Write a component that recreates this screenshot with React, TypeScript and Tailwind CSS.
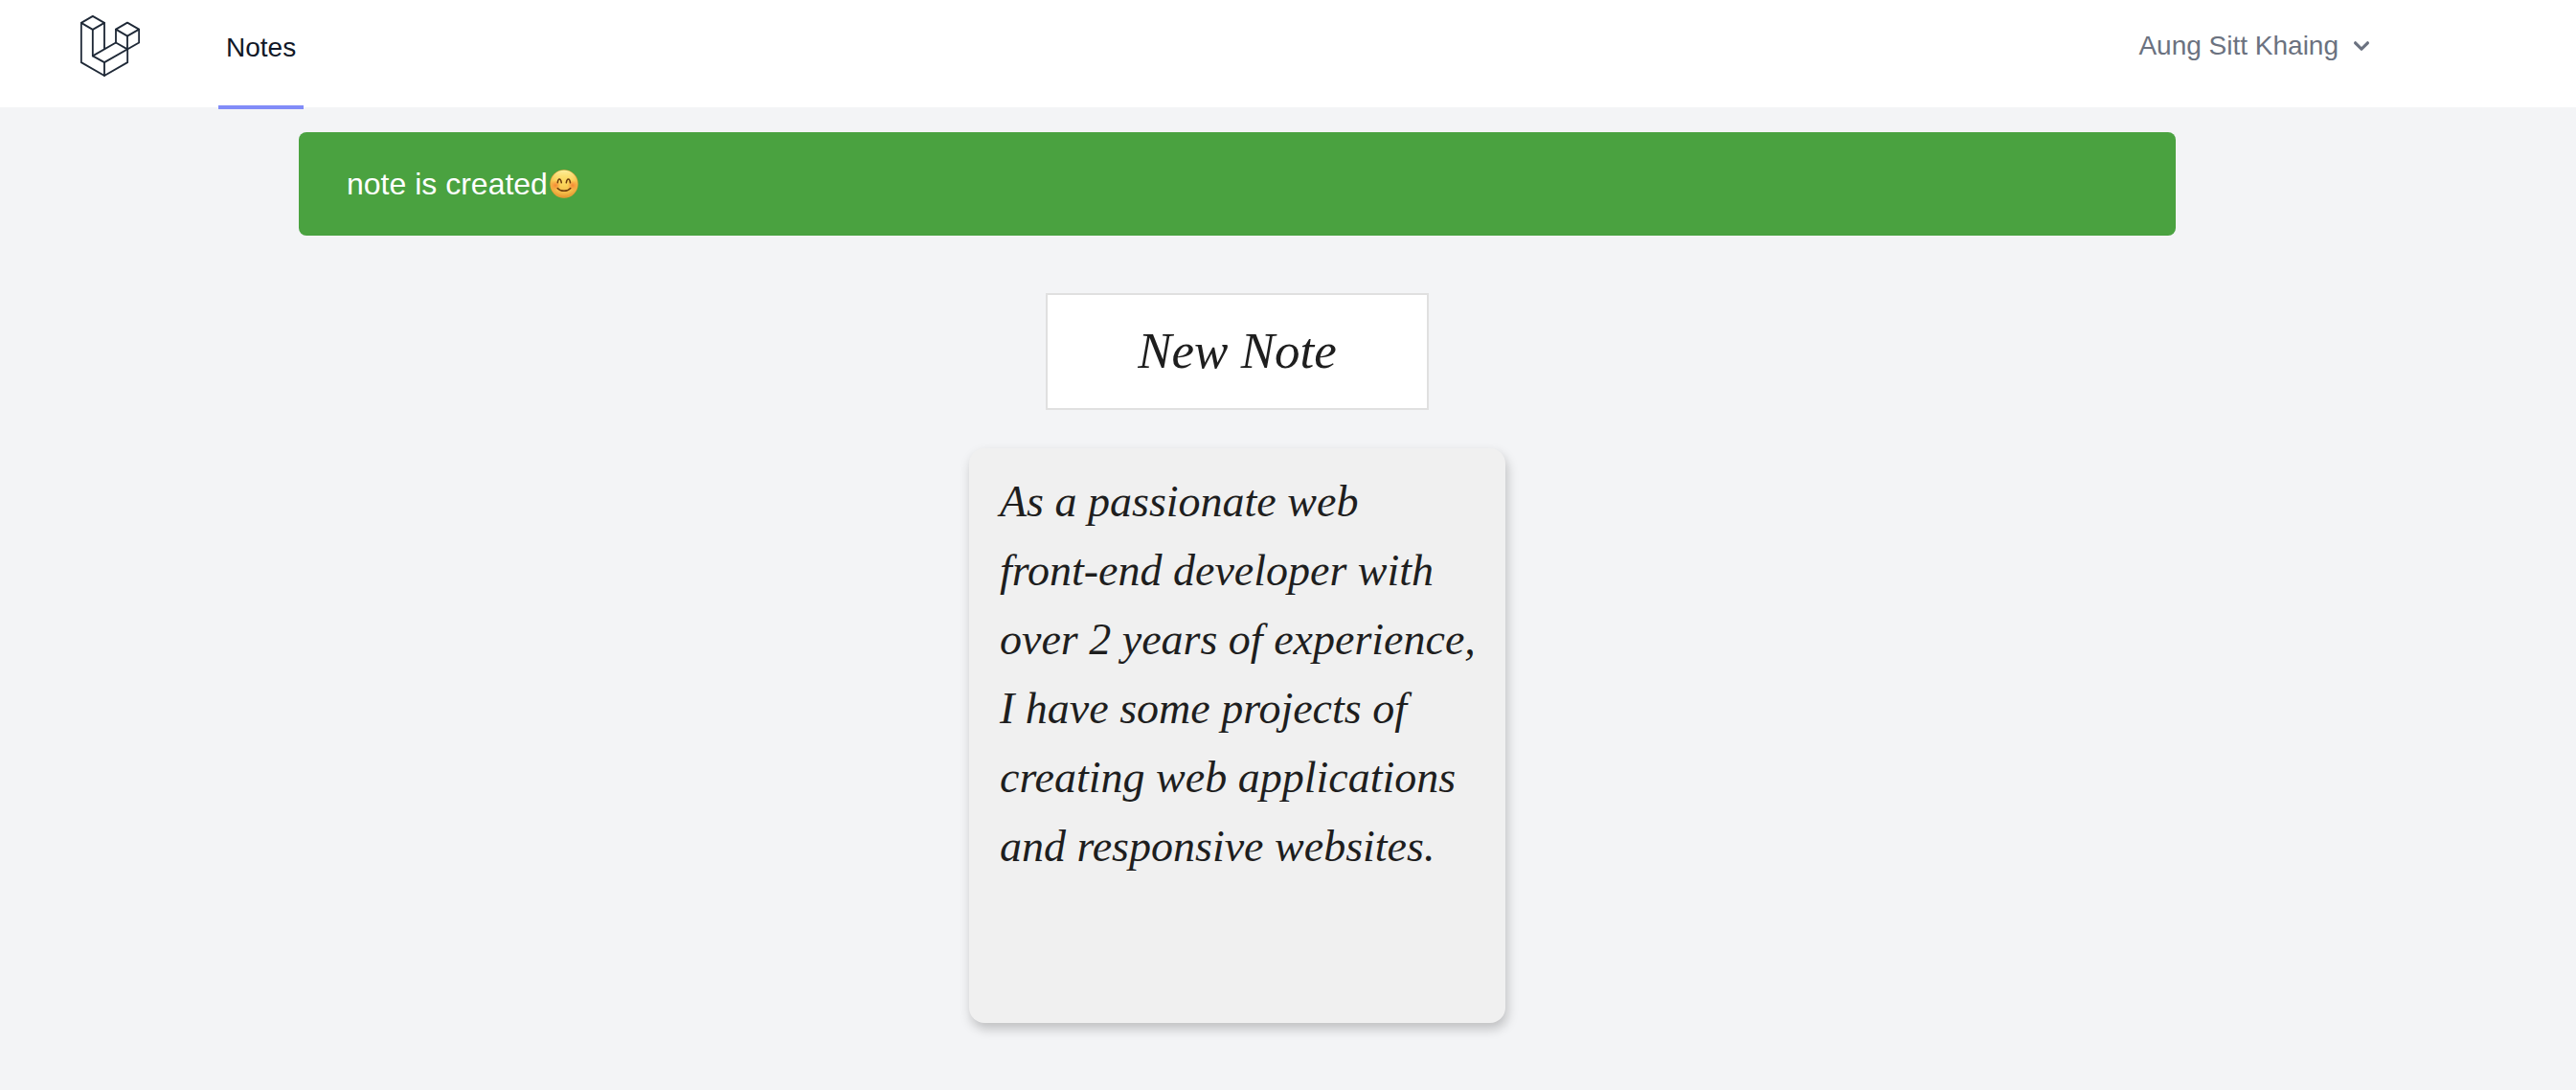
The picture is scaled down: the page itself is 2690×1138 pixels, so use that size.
const noteFont = "font-['Apple_Chancery','Liberation_Serif',serif] italic text-[#1e1e1e]";

const noteLines = [
  'As a passionate web',
  'front-end developer with',
  'over 2 years of experience,',
  'I have some projects of',
  'creating web applications',
  'and responsive websites.',
];

function Logo() {
  return (
    <svg
      viewBox="72 48 186 192"
      className="h-16 w-[62px] text-[#1f2937]"
      fill="none"
      stroke="currentColor"
      strokeWidth="5.500"
      strokeLinejoin="round"
      strokeLinecap="round"
      aria-hidden="true"
    >
      <path d="M110.5 50.500 147 71.500 110.500 92.500 74.500 71.500Z" />
      <path d="M74.500 71.500V195.500L147 237 219.500 195.500V154" />
      <path d="M110.500 92.500V175L147 195.500V237" />
      <path d="M147 71.500V154M110.500 175 183 133.500M147 195.500 255.500 133.500V92" />
      <path d="M219 71 255.500 92 219 113 183 92Z" />
      <path d="M183 92V133.500L219 154M219 113V154" />
    </svg>
  );
}

function Smile() {
  return (
    <svg viewBox="0 0 30 30" className="ml-0.5 size-[30px]" role="img" aria-label="smiling face">
      <defs>
        <radialGradient id="face" cx="15" cy="15" r="15" gradientUnits="userSpaceOnUse">
          <stop offset="0" stopColor="#fbd75b" />
          <stop offset="0.7" stopColor="#f9c64a" />
          <stop offset="1" stopColor="#e59a31" />
        </radialGradient>
        <linearGradient id="shine" x1="0" y1="0" x2="0" y2="1">
          <stop offset="0" stopColor="#fff8a8" stopOpacity="0.9" />
          <stop offset="0.45" stopColor="#fde26a" stopOpacity="0.3" />
          <stop offset="1" stopColor="#e0882a" stopOpacity="0.5" />
        </linearGradient>
        <radialGradient id="cheek">
          <stop offset="0" stopColor="#f4772e" stopOpacity="0.8" />
          <stop offset="1" stopColor="#f4772e" stopOpacity="0" />
        </radialGradient>
      </defs>
      <circle cx="15" cy="15" r="14.700" fill="url(#face)" />
      <circle cx="15" cy="15" r="14.200" fill="url(#shine)" />
      <circle cx="6" cy="16.500" r="5.500" fill="url(#cheek)" />
      <circle cx="24" cy="16.500" r="5.500" fill="url(#cheek)" />
      <g fill="none" stroke="#6b3a0c" strokeLinecap="round" strokeWidth="1.500">
        <path d="M8.300 13.800C8.800 8.600 11.500 8.600 12.300 13.800" />
        <path d="M17.300 13.800C18.100 8.600 20.900 8.600 21.500 13.800" />
        <path d="M8.200 19.500C11.500 23.300 18.500 23.300 21.800 19.500" />
      </g>
    </svg>
  );
}

function Header() {
  return (
    <header className="border-b-2 border-[#f3f4f6] bg-white">
      <nav className="flex h-28 items-start justify-between pr-52 pl-21">
        <div className="flex">
          <a href="#home" aria-label="Home" className="pt-4">
            <Logo />
          </a>
          <a
            href="#notes"
            className="ml-[82px] h-[114px] border-b-4 border-[#818cf8] px-2 pt-[30px] text-[28px] leading-10 text-[#111827]"
          >
            Notes
          </a>
        </div>
        <button type="button" className="mt-7 flex items-center gap-2 text-[28px] leading-10 text-[#6b7280]">
          Aung Sitt Khaing
          <svg viewBox="0 0 20 20" className="size-8" fill="currentColor" aria-hidden="true">
            <path
              fillRule="evenodd"
              clipRule="evenodd"
              d="M5.293 7.293a1 1 0 011.414 0L10 10.586l3.293-3.293a1 1 0 111.414 1.414l-4 4a1 1 0 01-1.414 0l-4-4a1 1 0 010-1.414z"
            />
          </svg>
        </button>
      </nav>
    </header>
  );
}

export default function App() {
  return (
    <div className="min-h-screen bg-[#f3f4f6] font-['Liberation_Sans',Arial,sans-serif]">
      <Header />
      <main className="flex flex-col items-center pt-6 pr-[106px] pb-[70px]">
        <div
          role="status"
          className="flex w-full max-w-[1960px] items-center rounded-lg bg-[#4aa240] px-[50px] py-[30px] text-[32px] leading-12 text-white"
        >
          note is created
          <Smile />
        </div>
        <h1
          className={`mt-15 w-full max-w-[400px] border-2 border-[#e0e0e0] bg-white pt-[22px] pb-6 text-center text-[53px] leading-[72px] ${noteFont}`}
        >
          New Note
        </h1>
        <article
          className={`mt-10 min-h-[600px] w-full max-w-[560px] rounded-2xl bg-[#f0f0f0] py-5 pr-4 pl-8 text-[46px] leading-[72px] shadow-[2px_6px_12px_rgba(0,0,0,0.22)] ${noteFont}`}
        >
          <p className="whitespace-pre-line">{noteLines.join('\n')}</p>
        </article>
      </main>
    </div>
  );
}
